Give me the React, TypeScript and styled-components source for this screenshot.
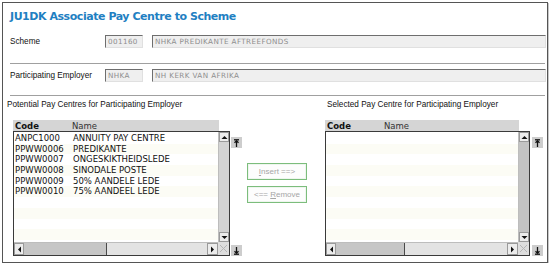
import * as React from 'react';
import styled, { createGlobalStyle } from 'styled-components';

const GlobalStyle = createGlobalStyle`
  html, body {
    margin: 0;
    padding: 0;
    background: #fff;
  }
  body {
    font-family: "Liberation Sans", Arial, sans-serif;
  }
`;

const Frame = styled.div`
  box-sizing: border-box;
  width: 546px;
  height: 261px;
  margin: 2px 0 0 2px;
  border: 1px solid #555;
  box-shadow: 1px 1px 0 #c8c8c8;
  padding: 0 1px 0 4px;
  display: flex;
  flex-direction: column;
  overflow: hidden;
`;

const Title = styled.h1`
  margin: 6px 0 0 3px;
  height: 16px;
  line-height: 16px;
  font-family: "DejaVu Sans", Verdana, sans-serif;
  font-size: 11px;
  font-weight: bold;
  letter-spacing: -0.45px;
  color: #1f80c2;
`;

const FieldRow = styled.div<{ $top: number }>`
  display: flex;
  align-items: center;
  height: 13px;
  margin: ${(p) => p.$top}px 0 0 3px;
`;

const Label = styled.span`
  width: 95px;
  flex: 0 0 auto;
  font-size: 8.2px;
  color: #111;
`;

const ReadOnlyInput = styled.div<{ $width?: number }>`
  box-sizing: border-box;
  height: 13px;
  ${(p) => (p.$width ? `width: ${p.$width}px; flex: 0 0 auto;` : 'flex: 1;')}
  margin-right: 9px;
  &:last-child {
    margin-right: 0;
  }
  background: #efefef;
  border-top: 1px solid #6e6e6e;
  border-left: 1px solid #6e6e6e;
  border-right: 1px solid #e0e0e0;
  border-bottom: 1px solid #e0e0e0;
  padding-left: 2px;
  font-family: "DejaVu Sans", Verdana, sans-serif;
  font-size: 7.2px;
  letter-spacing: 0.4px;
  line-height: 11px;
  color: #8e8e8e;
  white-space: nowrap;
`;

const Divider = styled.div<{ $top: number }>`
  height: 1px;
  margin: ${(p) => p.$top}px 1px 0 3px;
  background: #a0a0a0;
`;

const ListsRow = styled.div`
  display: flex;
  margin-top: 4px;
`;

const Column = styled.div<{ $width: number; $left: number }>`
  width: ${(p) => p.$width}px;
  margin-left: ${(p) => p.$left}px;
  display: flex;
  flex-direction: column;
`;

const SectionLabel = styled.div<{ $indent: number }>`
  height: 10px;
  line-height: 10px;
  padding-left: ${(p) => p.$indent}px;
  font-size: 8.2px;
  color: #111;
  white-space: nowrap;
`;

const Panel = styled.div<{ $indent: number }>`
  display: flex;
  margin: 10px 0 0 ${(p) => p.$indent}px;
`;

const ListWrap = styled.div<{ $width: number }>`
  width: ${(p) => p.$width}px;
  display: flex;
  flex-direction: column;
`;

const ListHeader = styled.div`
  display: flex;
  align-items: center;
  height: 11px;
  width: calc(100% - 11px);
  background: #d5d5d5;
  padding-left: 2px;
  box-sizing: border-box;
  font-family: "DejaVu Sans", Verdana, sans-serif;
  font-size: 8.5px;
`;

const HeadCell = styled.span<{ $bold?: boolean }>`
  width: ${(p) => (p.$bold ? '57px' : 'auto')};
  font-weight: ${(p) => (p.$bold ? 'bold' : 'normal')};
  color: ${(p) => (p.$bold ? '#111' : '#333')};
`;

const ListBox = styled.div`
  box-sizing: border-box;
  height: 125px;
  border: 1px solid #3a3a3a;
  display: grid;
  grid-template-columns: 1fr 11px;
  grid-template-rows: 1fr 13px;
  background: #fff;
`;

const Rows = styled.div`
  overflow: hidden;
  padding-top: 1px;
`;

const Row = styled.div<{ $striped: boolean }>`
  display: flex;
  height: 10.7px;
  line-height: 10.7px;
  padding-left: 1px;
  background: ${(p) => (p.$striped ? '#fcfcf5' : '#fff')};
  font-family: "DejaVu Sans", Verdana, sans-serif;
  font-size: 8.5px;
  color: #111;
  white-space: nowrap;
`;

const CodeCell = styled.span`
  width: 58px;
  flex: 0 0 auto;
`;

const VScroll = styled.div`
  display: flex;
  flex-direction: column;
  border-left: 1px solid #bdbdbd;
`;

const Track = styled.div<{ $full?: boolean }>`
  flex: 1;
  background: ${(p) => (p.$full ? '#c3c3c3' : '#d3d3d3')};
`;

const ArrowBtn = styled.div<{ $w: number; $h: number }>`
  box-sizing: border-box;
  width: ${(p) => p.$w}px;
  height: ${(p) => p.$h}px;
  flex: 0 0 auto;
  display: flex;
  align-items: center;
  justify-content: center;
  background: #ececec;
  border: 1px solid #9a9a9a;
`;

const HScroll = styled.div`
  grid-column: 1;
  display: flex;
  align-items: stretch;
  background: #e3e3e3;
  border-top: 1px solid #bdbdbd;
`;

const HThumb = styled.div<{ $width: number }>`
  width: ${(p) => p.$width}px;
  flex: 0 0 auto;
  background: #c6c6c6;
  border-right: 1px solid #4a4a4a;
`;

const HTrack = styled.div`
  flex: 1;
`;

const Corner = styled.div`
  background: #dedede;
  display: flex;
  align-items: center;
  justify-content: center;
`;

const SideCol = styled.div<{ $gap: number }>`
  display: flex;
  flex-direction: column;
  justify-content: space-between;
  margin-left: ${(p) => p.$gap}px;
  padding-top: 6px;
  height: 125px;
  margin-top: 11px;
  box-sizing: border-box;
`;

const SideBtn = styled.div`
  width: 11px;
  height: 11px;
  background: #cdcdcd;
  display: flex;
  align-items: center;
  justify-content: center;
`;

const ButtonCol = styled.div`
  display: flex;
  flex-direction: column;
  gap: 6px;
  margin-left: 4px;
  padding-top: 63px;
`;

const ActionButton = styled.button`
  box-sizing: border-box;
  width: 60px;
  height: 17px;
  padding: 0;
  border: 1px solid #7cbd7c;
  box-shadow: inset 0 0 0 1px #eef6ee;
  background: #fdfdfd;
  color: #a6a6a6;
  font-family: "Liberation Sans", Arial, sans-serif;
  font-size: 8px;
  cursor: default;

  u {
    text-decoration: underline;
  }
`;

const Tri = ({ dir }: { dir: 'up' | 'down' | 'left' | 'right' }) => {
  const pts = {
    up: '0.5,4 3.5,1 6.5,4',
    down: '0.5,1 3.5,4 6.5,1',
    left: '4,0.5 1,3.5 4,6.5',
    right: '1,0.5 4,3.5 1,6.5',
  }[dir];
  const vertical = dir === 'up' || dir === 'down';
  return (
    <svg width={vertical ? 7 : 5} height={vertical ? 5 : 7}>
      <polygon points={pts} fill="#111" />
    </svg>
  );
};

const MoveGlyph = ({ dir }: { dir: 'up' | 'down' }) => (
  <svg width="7" height="8" viewBox="0 0 7 8">
    {dir === 'up' ? (
      <g stroke="#111" strokeWidth="1.3" fill="none">
        <path d="M1 0.8h5" />
        <path d="M3.5 1.5v6.5" />
        <path d="M1.5 3.8l2-2 2 2" />
      </g>
    ) : (
      <g stroke="#111" strokeWidth="1.3" fill="none">
        <path d="M1 7.2h5" />
        <path d="M3.5 0v6.5" />
        <path d="M1.5 4.2l2 2 2-2" />
      </g>
    )}
  </svg>
);

const CornerGlyph = () => (
  <svg width="9" height="9" viewBox="0 0 9 9">
    <path d="M1 1l7 7M8 1l-7 7" stroke="#b5b5b5" strokeWidth="1" />
  </svg>
);

type Item = [string, string];

const payCentres: Item[] = [
  ['ANPC1000', 'ANNUITY PAY CENTRE'],
  ['PPWW0006', 'PREDIKANTE'],
  ['PPWW0007', 'ONGESKIKTHEIDSLEDE'],
  ['PPWW0008', 'SINODALE POSTE'],
  ['PPWW0009', '50% AANDELE LEDE'],
  ['PPWW0010', '75% AANDEEL LEDE'],
];

const ROW_COUNT = 11;

interface GridListProps {
  items: Item[];
  width: number;
  thumb: number;
  fullTrack?: boolean;
  sideGap: number;
}

const GridList = ({ items, width, thumb, fullTrack, sideGap }: GridListProps) => {
  const rows = Array.from({ length: ROW_COUNT }, (_, i) => items[i] || null);
  return (
    <>
      <ListWrap $width={width}>
        <ListHeader>
          <HeadCell $bold>Code</HeadCell>
          <HeadCell>Name</HeadCell>
        </ListHeader>
        <ListBox>
          <Rows>
            {rows.map((r, i) => (
              <Row key={i} $striped={i % 2 === 1}>
                <CodeCell>{r ? r[0] : ''}</CodeCell>
                <span>{r ? r[1] : ''}</span>
              </Row>
            ))}
          </Rows>
          <VScroll>
            <ArrowBtn $w={10} $h={10}>
              <Tri dir="up" />
            </ArrowBtn>
            <Track $full={fullTrack} />
            <ArrowBtn $w={10} $h={10}>
              <Tri dir="down" />
            </ArrowBtn>
          </VScroll>
          <HScroll>
            <ArrowBtn $w={10} $h={12}>
              <Tri dir="left" />
            </ArrowBtn>
            <HThumb $width={thumb} />
            <HTrack />
            <ArrowBtn $w={11} $h={12}>
              <Tri dir="right" />
            </ArrowBtn>
          </HScroll>
          <Corner>
            <CornerGlyph />
          </Corner>
        </ListBox>
      </ListWrap>
      <SideCol $gap={sideGap}>
        <SideBtn>
          <MoveGlyph dir="up" />
        </SideBtn>
        <SideBtn>
          <MoveGlyph dir="down" />
        </SideBtn>
      </SideCol>
    </>
  );
};

const App = () => (
  <>
    <GlobalStyle />
    <Frame>
      <Title>JU1DK Associate Pay Centre to Scheme</Title>

      <FieldRow $top={10}>
        <Label>Scheme</Label>
        <ReadOnlyInput $width={38}>001160</ReadOnlyInput>
        <ReadOnlyInput>NHKA PREDIKANTE AFTREEFONDS</ReadOnlyInput>
      </FieldRow>
      <Divider $top={15} />

      <FieldRow $top={5}>
        <Label>Participating Employer</Label>
        <ReadOnlyInput $width={38}>NHKA</ReadOnlyInput>
        <ReadOnlyInput>NH KERK VAN AFRIKA</ReadOnlyInput>
      </FieldRow>
      <Divider $top={13} />

      <ListsRow>
        <Column $width={236} $left={0}>
          <SectionLabel $indent={0}>Potential Pay Centres for Participating Employer</SectionLabel>
          <Panel $indent={6}>
            <GridList items={payCentres} width={217} thumb={82} sideGap={1} />
          </Panel>
        </Column>

        <ButtonCol>
          <ActionButton>
            <u>I</u>nsert ==&gt;
          </ActionButton>
          <ActionButton>
            &lt;== <u>R</u>emove
          </ActionButton>
        </ButtonCol>

        <Column $width={220} $left={18}>
          <SectionLabel $indent={2}>Selected Pay Centre for Participating Employer</SectionLabel>
          <Panel $indent={0}>
            <GridList items={[]} width={205} thumb={68} fullTrack sideGap={2} />
          </Panel>
        </Column>
      </ListsRow>
    </Frame>
  </>
);

export default App;
